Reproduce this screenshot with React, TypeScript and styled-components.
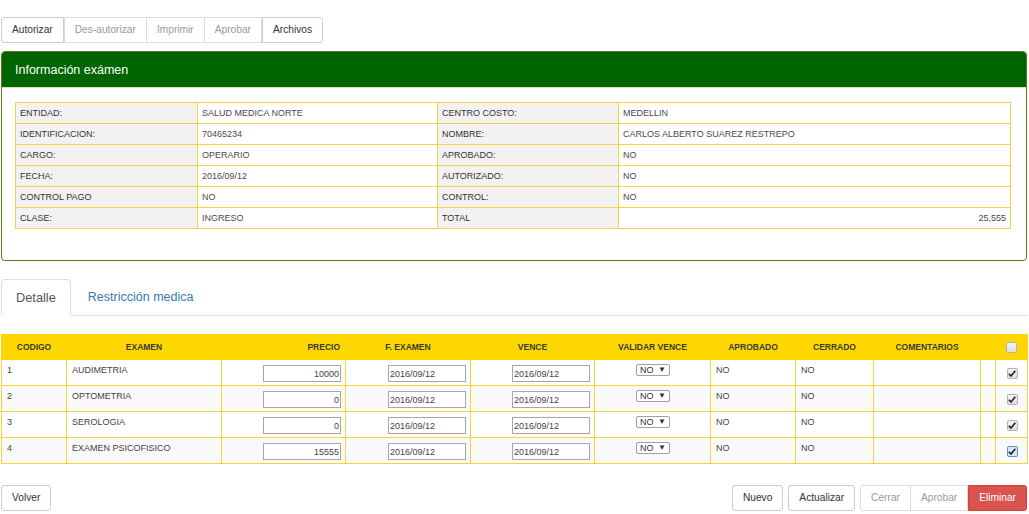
import React from "react";
import styled, { createGlobalStyle, css } from "styled-components";

const GlobalStyle = createGlobalStyle`
  html, body { margin: 0; padding: 0; background: #fff; }
  body {
    font-family: "Liberation Sans", Arial, Helvetica, sans-serif;
    color: #333;
  }
  * { box-sizing: border-box; }
`;

const Page = styled.div`
  padding: 17px 2px 5px 1px;
  width: 1029px;
`;

const ButtonGroup = styled.div`
  display: inline-flex;
`;

const Btn = styled.button<{ $disabled?: boolean; $danger?: boolean }>`
  font-family: "Liberation Sans", Arial, sans-serif;
  font-size: 10.2px;
  height: 26px;
  padding: 0 10px;
  line-height: 24px;
  background: #fff;
  color: #333;
  border: 1px solid #ccc;
  border-radius: 3px;
  cursor: pointer;
  ${(p) =>
    p.$disabled &&
    css`
      color: #9a9a9a;
      border-color: #dcdcdc;
    `}
  ${(p) =>
    p.$danger &&
    css`
      background: #d9534f;
      border-color: #d43f3a;
      color: #fff;
    `}
  ${ButtonGroup} > & {
    border-radius: 0;
  }
  ${ButtonGroup} > & + & {
    margin-left: -1px;
  }
  ${ButtonGroup} > &:first-child {
    border-radius: 3px 0 0 3px;
  }
  ${ButtonGroup} > &:last-child {
    border-radius: 0 3px 3px 0;
  }
`;

const Panel = styled.section`
  margin-top: 8px;
  border: 1px solid #5a7a14;
  border-radius: 4px;
  overflow: hidden;
`;

const PanelHeading = styled.div`
  height: 36px;
  background: #006400;
  color: #fff;
  font-size: 12.5px;
  display: flex;
  align-items: center;
  padding: 0 13px;
  border-bottom: 1px solid #cfe9c6;
`;

const PanelBody = styled.div`
  padding: 14px 15px 31px 13px;
`;

const InfoTable = styled.table`
  width: 100%;
  border-collapse: collapse;
  table-layout: fixed;
  font-size: 9px;
`;

const InfoCell = styled.td<{ $label?: boolean; $right?: boolean }>`
  border: 1px solid #f4d34a;
  height: 21px;
  padding: 0 4px;
  background: ${(p) => (p.$label ? "#f2f2f2" : "#fff")};
  color: ${(p) => (p.$label ? "#333" : "#4a4a4a")};
  text-align: ${(p) => (p.$right ? "right" : "left")};
`;

const Tabs = styled.div`
  margin-top: 18px;
  display: flex;
  border-bottom: 1px solid #ddd;
`;

const Tab = styled.div<{ $active?: boolean }>`
  height: 37px;
  line-height: 35px;
  padding: 0 14px;
  font-size: 12.5px;
  margin-right: 2px;
  margin-bottom: -1px;
  border: 1px solid transparent;
  border-radius: 4px 4px 0 0;
  color: #337ab7;
  ${(p) =>
    p.$active &&
    css`
      color: #555;
      background: #fff;
      border-color: #ddd;
      border-bottom-color: #fff;
      font-size: 12.8px;
    `}
`;

const DetailTable = styled.table`
  margin-top: 18px;
  width: 1026px;
  border-collapse: collapse;
  table-layout: fixed;
  font-size: 9px;
`;

const Th = styled.th<{ $align?: "left" | "center" | "right" }>`
  background: #ffd700;
  height: 25px;
  padding: 0 5px;
  font-size: 8.5px;
  font-weight: bold;
  color: #3a3a3a;
  border: 1px solid #ffd700;
  text-align: ${(p) => p.$align || "center"};
  vertical-align: middle;
`;

const Td = styled.td<{ $align?: "left" | "center" | "right"; $striped?: boolean }>`
  border: 1px solid #f7d53a;
  height: 26px;
  padding: 4px 4px 3px 5px;
  vertical-align: top;
  line-height: 12px;
  color: #444;
  background: ${(p) => (p.$striped ? "#f9f9f9" : "#fff")};
  text-align: ${(p) => p.$align || "left"};
`;

const TextInput = styled.input<{ $right?: boolean }>`
  display: inline-block;
  width: 78px;
  height: 17px;
  border: 1px solid #a6a6a6;
  padding: 0 1px;
  font-family: "Liberation Sans", Arial, sans-serif;
  font-size: 9px;
  color: #444;
  background: #fff;
  text-align: ${(p) => (p.$right ? "right" : "left")};
  vertical-align: top;
  margin-top: 1px;
  outline: none;
`;

const FakeSelect = styled.span`
  display: inline-flex;
  align-items: center;
  justify-content: space-between;
  width: 34px;
  height: 12px;
  padding: 0 3px 0 3px;
  border: 1px solid #a0a0a0;
  border-radius: 2px;
  font-size: 9px;
  color: #333;
  background: #fff;
  line-height: 10px;
  & > span {
    font-size: 8px;
  }
`;

const Check = styled.span<{ $checked?: boolean; $focus?: boolean }>`
  display: inline-flex;
  align-items: center;
  justify-content: center;
  width: 11px;
  height: 11px;
  border: 1px solid ${(p) => (p.$focus ? "#5b8fd0" : "#b3b3b3")};
  border-radius: 2px;
  background: ${(p) =>
    p.$focus ? "#dce8f6" : "linear-gradient(#f4f4f4, #dedede)"};
  vertical-align: middle;
  margin-top: ${(p) => (p.$checked ? "4px" : "0")};
`;

const BottomBar = styled.div`
  margin-top: 21px;
  display: flex;
  justify-content: space-between;
  align-items: center;
`;

const RightActions = styled.div`
  display: flex;
  gap: 5px;
`;

const CheckMark = () => (
  <svg width="8" height="7" viewBox="0 0 8 7">
    <path d="M0.8 3.8 L3 6 L7.3 0.8" stroke="#222" strokeWidth="1.6" fill="none" />
  </svg>
);

const info: [string, string, string, string][] = [
  ["ENTIDAD:", "SALUD MEDICA NORTE", "CENTRO COSTO:", "MEDELLIN"],
  ["IDENTIFICACION:", "70465234", "NOMBRE:", "CARLOS ALBERTO SUAREZ RESTREPO"],
  ["CARGO:", "OPERARIO", "APROBADO:", "NO"],
  ["FECHA:", "2016/09/12", "AUTORIZADO:", "NO"],
  ["CONTROL PAGO", "NO", "CONTROL:", "NO"],
  ["CLASE:", "INGRESO", "TOTAL", "25,555"],
];

const rows = [
  { code: "1", name: "AUDIMETRIA", price: "10000" },
  { code: "2", name: "OPTOMETRIA", price: "0" },
  { code: "3", name: "SEROLOGIA", price: "0" },
  { code: "4", name: "EXAMEN PSICOFISICO", price: "15555" },
];

const colWidths = [65, 155, 124, 125, 124, 116, 85, 78, 107, 15, 32];

export default function App() {
  return (
    <Page>
      <GlobalStyle />
      <ButtonGroup>
        <Btn>Autorizar</Btn>
        <Btn $disabled>Des-autorizar</Btn>
        <Btn $disabled>Imprimir</Btn>
        <Btn $disabled>Aprobar</Btn>
        <Btn>Archivos</Btn>
      </ButtonGroup>

      <Panel>
        <PanelHeading>Información exámen</PanelHeading>
        <PanelBody>
          <InfoTable>
            <colgroup>
              <col style={{ width: 182 }} />
              <col style={{ width: 240 }} />
              <col style={{ width: 181 }} />
              <col />
            </colgroup>
            <tbody>
              {info.map((r, i) => (
                <tr key={i}>
                  <InfoCell $label>{r[0]}</InfoCell>
                  <InfoCell>{r[1]}</InfoCell>
                  <InfoCell $label>{r[2]}</InfoCell>
                  <InfoCell $right={i === 5}>{r[3]}</InfoCell>
                </tr>
              ))}
            </tbody>
          </InfoTable>
        </PanelBody>
      </Panel>

      <Tabs>
        <Tab $active>Detalle</Tab>
        <Tab>Restricción medica</Tab>
      </Tabs>

      <DetailTable>
        <colgroup>
          {colWidths.map((w, i) => (
            <col key={i} style={{ width: w }} />
          ))}
        </colgroup>
        <thead>
          <tr>
            <Th>CODIGO</Th>
            <Th>EXAMEN</Th>
            <Th $align="right">PRECIO</Th>
            <Th>F. EXAMEN</Th>
            <Th>VENCE</Th>
            <Th>VALIDAR VENCE</Th>
            <Th>APROBADO</Th>
            <Th>CERRADO</Th>
            <Th>COMENTARIOS</Th>
            <Th />
            <Th>
              <Check />
            </Th>
          </tr>
        </thead>
        <tbody>
          {rows.map((r, i) => {
            const s = i % 2 === 1;
            return (
              <tr key={r.code}>
                <Td $striped={s}>{r.code}</Td>
                <Td $striped={s}>{r.name}</Td>
                <Td $striped={s} $align="right">
                  <TextInput $right readOnly value={r.price} />
                </Td>
                <Td $striped={s} $align="right">
                  <TextInput readOnly value="2016/09/12" />
                </Td>
                <Td $striped={s} $align="right">
                  <TextInput readOnly value="2016/09/12" />
                </Td>
                <Td $striped={s} $align="center">
                  <FakeSelect>
                    NO <span>▼</span>
                  </FakeSelect>
                </Td>
                <Td $striped={s}>NO</Td>
                <Td $striped={s}>NO</Td>
                <Td $striped={s} />
                <Td $striped={s} />
                <Td $striped={s} $align="center">
                  <Check $checked $focus={i === 3}>
                    <CheckMark />
                  </Check>
                </Td>
              </tr>
            );
          })}
        </tbody>
      </DetailTable>

      <BottomBar>
        <Btn>Volver</Btn>
        <RightActions>
          <Btn>Nuevo</Btn>
          <Btn>Actualizar</Btn>
          <ButtonGroup>
            <Btn $disabled>Cerrar</Btn>
            <Btn $disabled>Aprobar</Btn>
            <Btn $danger>Eliminar</Btn>
          </ButtonGroup>
        </RightActions>
      </BottomBar>
    </Page>
  );
}
